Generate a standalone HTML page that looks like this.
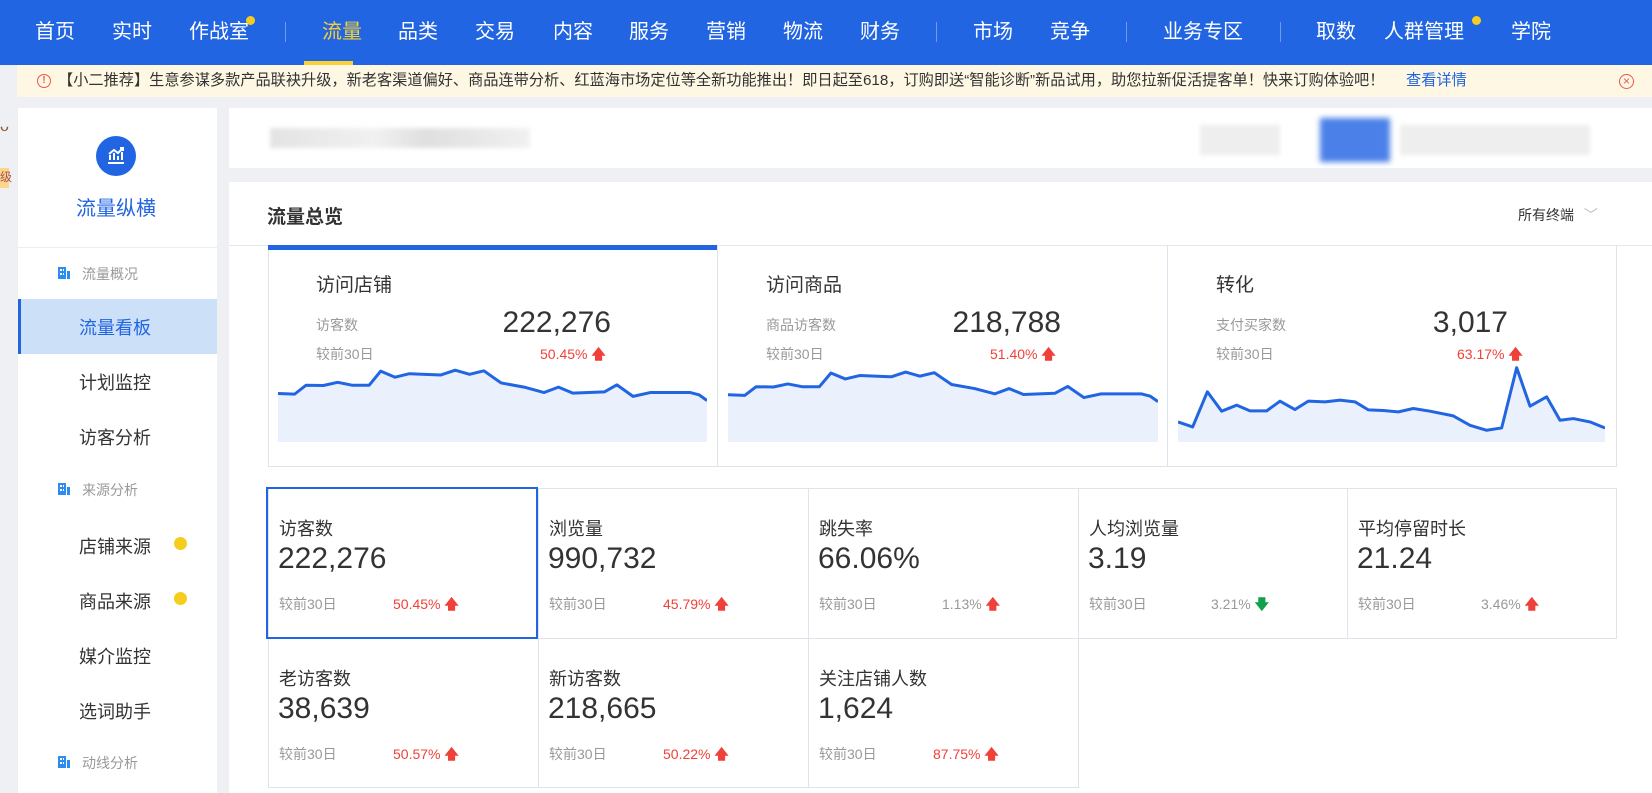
<!DOCTYPE html>
<html><head><meta charset="utf-8"><style>
*{margin:0;padding:0;box-sizing:border-box}
body{width:1652px;height:793px;overflow:hidden;background:#eef0f4;font-family:"Liberation Sans","Noto Sans CJK SC",sans-serif;position:relative;color:#333}
.a{position:absolute;white-space:nowrap}
#hdr{left:0;top:0;width:1652px;height:65px;background:#2165e3}
.nav{top:19px;font-size:20px;color:#fff;line-height:26px}
.sep{top:22px;width:1px;height:20px;background:#6f9bef}
.dot{width:9px;height:9px;border-radius:50%;background:#f5cd1e}
#notice{left:17px;top:65px;width:1635px;height:32px;background:#fdf7e4;font-size:15.2px;line-height:32px;color:#333}
.card{background:#fff}
.side{font-size:18px;color:#333}
.grp{font-size:14px;color:#999}
.cc{font-size:14px;color:#999}
.red{color:#f0403a}
.big{font-size:30px;color:#333;line-height:34px}
.ttl{font-size:19px;color:#333}
.mc{position:absolute;border:1px solid #dde4ec;background:#fff}
</style></head><body>
<div id="hdr" class="a"></div>
<div class="a nav" style="left:35px">首页</div>
<div class="a nav" style="left:112px">实时</div>
<div class="a nav" style="left:189px">作战室</div>
<div class="a dot" style="left:246px;top:16px"></div>
<div class="a sep" style="left:285px"></div>
<div class="a nav" style="left:322px;color:#f7d234">流量</div>
<div class="a" style="left:304px;top:61px;width:49px;height:4px;background:#f7d234"></div>
<div class="a nav" style="left:398px">品类</div>
<div class="a nav" style="left:475px">交易</div>
<div class="a nav" style="left:553px">内容</div>
<div class="a nav" style="left:629px">服务</div>
<div class="a nav" style="left:706px">营销</div>
<div class="a nav" style="left:783px">物流</div>
<div class="a nav" style="left:860px">财务</div>
<div class="a sep" style="left:936px"></div>
<div class="a nav" style="left:973px">市场</div>
<div class="a nav" style="left:1050px">竞争</div>
<div class="a sep" style="left:1126px"></div>
<div class="a nav" style="left:1163px">业务专区</div>
<div class="a sep" style="left:1280px"></div>
<div class="a nav" style="left:1316px">取数</div>
<div class="a nav" style="left:1384px">人群管理</div>
<div class="a dot" style="left:1472px;top:16px"></div>
<div class="a nav" style="left:1511px">学院</div>

<div id="notice" class="a"><span style="position:absolute;left:20px;top:9px;width:14px;height:14px;border:1.5px solid #f0554a;border-radius:50%;color:#f0554a;font-size:10px;line-height:11px;text-align:center;font-weight:bold">!</span><span style="position:absolute;left:41px">【小二推荐】生意参谋多款产品联袂升级，新老客渠道偏好、商品连带分析、红蓝海市场定位等全新功能推出！即日起至618，订购即送“智能诊断”新品试用，助您拉新促活提客单！快来订购体验吧！</span><span style="position:absolute;left:1389px;color:#2165e3">查看详情</span><span style="position:absolute;left:1602px;top:9px;width:15px;height:15px;border:1.5px solid #f0554a;border-radius:50%;color:#f0554a;font-size:12px;line-height:12px;text-align:center">×</span></div>

<div class="a" style="left:0;top:118px;width:8px;height:20px;color:#8a5a2a;font-size:16px">ᴗ</div>
<div class="a" style="left:0;top:168px;width:9px;height:20px;background:#fcd68a;font-size:12px;color:#a55">级</div>

<!-- sidebar -->
<div class="a card" style="left:18px;top:108px;width:199px;height:685px"></div>
<div class="a" style="left:96px;top:136px;width:40px;height:40px;border-radius:50%;background:#2165e3"></div>
<svg class="a" style="left:104px;top:144px" width="24" height="24" viewBox="0 0 24 24" fill="none" stroke="#fff" stroke-width="2"><path d="M4 19h16M6 16V11M10 16V9M14 16V12M18 16V8M5 10l5-4 4 3 5-5M16 4h3v3"/></svg>
<div class="a" style="left:76px;top:192px;font-size:20px;color:#2165e3">流量纵横</div>
<div class="a" style="left:18px;top:247px;width:199px;height:1px;background:#eee"></div>
<svg class="a" style="left:57px;top:266px" width="14" height="14" viewBox="0 0 14 14" fill="#2d8cf0"><path d="M1 1h8v12H1zM3 3v2h2V3zM6 3v2h1V3zM3 7v2h2V7zM6 7v2h1V7zM10 5h3v8h-3z"/></svg>
<div class="a grp" style="left:82px;top:264px">流量概况</div>
<div class="a" style="left:18px;top:299px;width:199px;height:55px;background:#cce0f8;border-left:3px solid #2165e3"></div>
<div class="a side" style="left:79px;top:314px;color:#2165e3">流量看板</div>
<div class="a side" style="left:79px;top:369px">计划监控</div>
<div class="a side" style="left:79px;top:424px">访客分析</div>
<svg class="a" style="left:57px;top:482px" width="14" height="14" viewBox="0 0 14 14" fill="#2d8cf0"><path d="M1 1h8v12H1zM3 3v2h2V3zM6 3v2h1V3zM3 7v2h2V7zM6 7v2h1V7zM10 5h3v8h-3z"/></svg>
<div class="a grp" style="left:82px;top:480px">来源分析</div>
<div class="a side" style="left:79px;top:533px">店铺来源</div>
<div class="a dot" style="left:174px;top:537px;width:13px;height:13px"></div>
<div class="a side" style="left:79px;top:588px">商品来源</div>
<div class="a dot" style="left:174px;top:592px;width:13px;height:13px"></div>
<div class="a side" style="left:79px;top:643px">媒介监控</div>
<div class="a side" style="left:79px;top:698px">选词助手</div>
<svg class="a" style="left:57px;top:755px" width="14" height="14" viewBox="0 0 14 14" fill="#2d8cf0"><path d="M1 1h8v12H1zM3 3v2h2V3zM6 3v2h1V3zM3 7v2h2V7zM6 7v2h1V7zM10 5h3v8h-3z"/></svg>
<div class="a grp" style="left:82px;top:753px">动线分析</div>

<!-- top card -->
<div class="a card" style="left:229px;top:108px;width:1423px;height:60px"></div>
<div class="a" style="left:270px;top:128px;width:260px;height:20px;background:linear-gradient(90deg,#ddd,#eee 40%,#d8d8d8 60%,#eee);opacity:.8;filter:blur(2px)"></div>
<div class="a" style="left:1200px;top:125px;width:80px;height:30px;background:#eee;filter:blur(2px)"></div>
<div class="a" style="left:1320px;top:118px;width:70px;height:44px;background:#4a80e8;filter:blur(3px)"></div>
<div class="a" style="left:1400px;top:125px;width:190px;height:30px;background:#eee;filter:blur(2px)"></div>

<!-- main card -->
<div class="a card" style="left:229px;top:182px;width:1423px;height:611px"></div>
<div class="a" style="left:267px;top:202px;font-size:19px;font-weight:bold;color:#333">流量总览</div>
<div class="a" style="left:1518px;top:205px;font-size:14px;color:#333">所有终端 <span style="color:#bbb;margin-left:6px">﹀</span></div>
<div class="a" style="left:229px;top:245px;width:1423px;height:1px;background:#e3e8ee"></div>

<!-- chart cards -->
<div class="a" style="left:268px;top:245px;width:1349px;height:222px;border:1px solid #dde4ec;border-top:none"></div>
<div class="a" style="left:717px;top:245px;width:1px;height:222px;background:#dde4ec"></div>
<div class="a" style="left:1167px;top:245px;width:1px;height:222px;background:#dde4ec"></div>
<div class="a" style="left:268px;top:245px;width:449px;height:5px;background:#2165e3"></div>

<div class="a ttl" style="left:316px;top:270px">访问店铺</div>
<div class="a cc" style="left:316px;top:315px">访客数</div>
<div class="a big" style="left:468px;width:143px;text-align:right;top:306px">222,276</div>
<div class="a cc" style="left:316px;top:344px">较前30日</div>
<div class="a red" style="left:540px;top:344px;font-size:14px">50.45% <b>🡅</b></div>

<div class="a ttl" style="left:766px;top:270px">访问商品</div>
<div class="a cc" style="left:766px;top:315px">商品访客数</div>
<div class="a big" style="left:918px;width:143px;text-align:right;top:306px">218,788</div>
<div class="a cc" style="left:766px;top:344px">较前30日</div>
<div class="a red" style="left:990px;top:344px;font-size:14px">51.40% <b>🡅</b></div>

<div class="a ttl" style="left:1216px;top:270px">转化</div>
<div class="a cc" style="left:1216px;top:315px">支付买家数</div>
<div class="a big" style="left:1368px;width:140px;text-align:right;top:306px">3,017</div>
<div class="a cc" style="left:1216px;top:344px">较前30日</div>
<div class="a red" style="left:1457px;top:344px;font-size:14px">63.17% <b>🡅</b></div>

<svg class="a" style="left:278px;top:367px" width="429" height="75" viewBox="31 370 748 235" preserveAspectRatio="none"><path d="M31 453L60 455L80 427L110 428L135 418L160 427L190 427L210 383L235 402L260 391L315 395L340 380L365 393L390 382L420 420L460 433L495 450L520 433L545 452L600 448L622 426L650 462L680 450L750 450L765 457L779 475L779 605L31 605Z" fill="#eaf1fc"/><path d="M31 453L60 455L80 427L110 428L135 418L160 427L190 427L210 383L235 402L260 391L315 395L340 380L365 393L390 382L420 420L460 433L495 450L520 433L545 452L600 448L622 426L650 462L680 450L750 450L765 457L779 475" fill="none" stroke="#2165e3" stroke-width="3" vector-effect="non-scaling-stroke" stroke-linejoin="round"/></svg>
<svg class="a" style="left:728px;top:369px" width="430" height="73" viewBox="31 370 748 235" preserveAspectRatio="none"><path d="M31 453L60 455L80 427L110 428L135 418L160 427L190 427L210 383L235 402L260 391L315 395L340 380L365 393L390 382L420 420L460 433L495 450L520 433L545 452L600 448L622 426L650 462L680 450L750 450L765 457L779 475L779 605L31 605Z" fill="#eaf1fc"/><path d="M31 453L60 455L80 427L110 428L135 418L160 427L190 427L210 383L235 402L260 391L315 395L340 380L365 393L390 382L420 420L460 433L495 450L520 433L545 452L600 448L622 426L650 462L680 450L750 450L765 457L779 475" fill="none" stroke="#2165e3" stroke-width="3" vector-effect="non-scaling-stroke" stroke-linejoin="round"/></svg>
<svg class="a" style="left:1178px;top:365px" width="427" height="77" viewBox="84 360 1281 230" preserveAspectRatio="none"><path d="M84 530L128 545L172 440L215 498L260 480L300 497L350 497L390 468L435 493L475 468L525 470L570 465L615 470L655 494L700 496L745 500L790 490L840 498L910 512L960 540L1010 555L1055 548L1100 368L1140 483L1190 455L1230 525L1270 520L1320 530L1365 548L1365 590L84 590Z" fill="#eaf1fc"/><path d="M84 530L128 545L172 440L215 498L260 480L300 497L350 497L390 468L435 493L475 468L525 470L570 465L615 470L655 494L700 496L745 500L790 490L840 498L910 512L960 540L1010 555L1055 548L1100 368L1140 483L1190 455L1230 525L1270 520L1320 530L1365 548" fill="none" stroke="#2165e3" stroke-width="3" vector-effect="non-scaling-stroke" stroke-linejoin="round"/></svg>

<!-- metric grid -->
<div class="mc" style="left:268px;top:488px;width:271px;height:151px"></div>
<div class="mc" style="left:538px;top:488px;width:271px;height:151px"></div>
<div class="mc" style="left:808px;top:488px;width:271px;height:151px"></div>
<div class="mc" style="left:1078px;top:488px;width:270px;height:151px"></div>
<div class="mc" style="left:1347px;top:488px;width:270px;height:151px"></div>
<div class="mc" style="left:268px;top:638px;width:271px;height:150px"></div>
<div class="mc" style="left:538px;top:638px;width:271px;height:150px"></div>
<div class="mc" style="left:808px;top:638px;width:271px;height:150px"></div>
<div class="a" style="left:266px;top:487px;width:272px;height:152px;border:2px solid #2165e3"></div>

<div class="a ttl" style="left:279px;top:515px;font-size:18px">访客数</div>
<div class="a big" style="left:278px;top:542px">222,276</div>
<div class="a cc" style="left:279px;top:594px">较前30日</div>
<div class="a red" style="left:393px;top:594px;font-size:14px">50.45% <b>🡅</b></div>

<div class="a ttl" style="left:549px;top:515px;font-size:18px">浏览量</div>
<div class="a big" style="left:548px;top:542px">990,732</div>
<div class="a cc" style="left:549px;top:594px">较前30日</div>
<div class="a red" style="left:663px;top:594px;font-size:14px">45.79% <b>🡅</b></div>

<div class="a ttl" style="left:819px;top:515px;font-size:18px">跳失率</div>
<div class="a big" style="left:818px;top:542px">66.06%</div>
<div class="a cc" style="left:819px;top:594px">较前30日</div>
<div class="a" style="left:942px;top:594px;font-size:14px;color:#999">1.13% <b class="red">🡅</b></div>

<div class="a ttl" style="left:1089px;top:515px;font-size:18px">人均浏览量</div>
<div class="a big" style="left:1088px;top:542px">3.19</div>
<div class="a cc" style="left:1089px;top:594px">较前30日</div>
<div class="a" style="left:1211px;top:594px;font-size:14px;color:#999">3.21% <b style="color:#12a04a">🡇</b></div>

<div class="a ttl" style="left:1358px;top:515px;font-size:18px">平均停留时长</div>
<div class="a big" style="left:1357px;top:542px">21.24</div>
<div class="a cc" style="left:1358px;top:594px">较前30日</div>
<div class="a" style="left:1481px;top:594px;font-size:14px;color:#999">3.46% <b class="red">🡅</b></div>

<div class="a ttl" style="left:279px;top:665px;font-size:18px">老访客数</div>
<div class="a big" style="left:278px;top:692px">38,639</div>
<div class="a cc" style="left:279px;top:744px">较前30日</div>
<div class="a red" style="left:393px;top:744px;font-size:14px">50.57% <b>🡅</b></div>

<div class="a ttl" style="left:549px;top:665px;font-size:18px">新访客数</div>
<div class="a big" style="left:548px;top:692px">218,665</div>
<div class="a cc" style="left:549px;top:744px">较前30日</div>
<div class="a red" style="left:663px;top:744px;font-size:14px">50.22% <b>🡅</b></div>

<div class="a ttl" style="left:819px;top:665px;font-size:18px">关注店铺人数</div>
<div class="a big" style="left:818px;top:692px">1,624</div>
<div class="a cc" style="left:819px;top:744px">较前30日</div>
<div class="a red" style="left:933px;top:744px;font-size:14px">87.75% <b>🡅</b></div>
</body></html>
